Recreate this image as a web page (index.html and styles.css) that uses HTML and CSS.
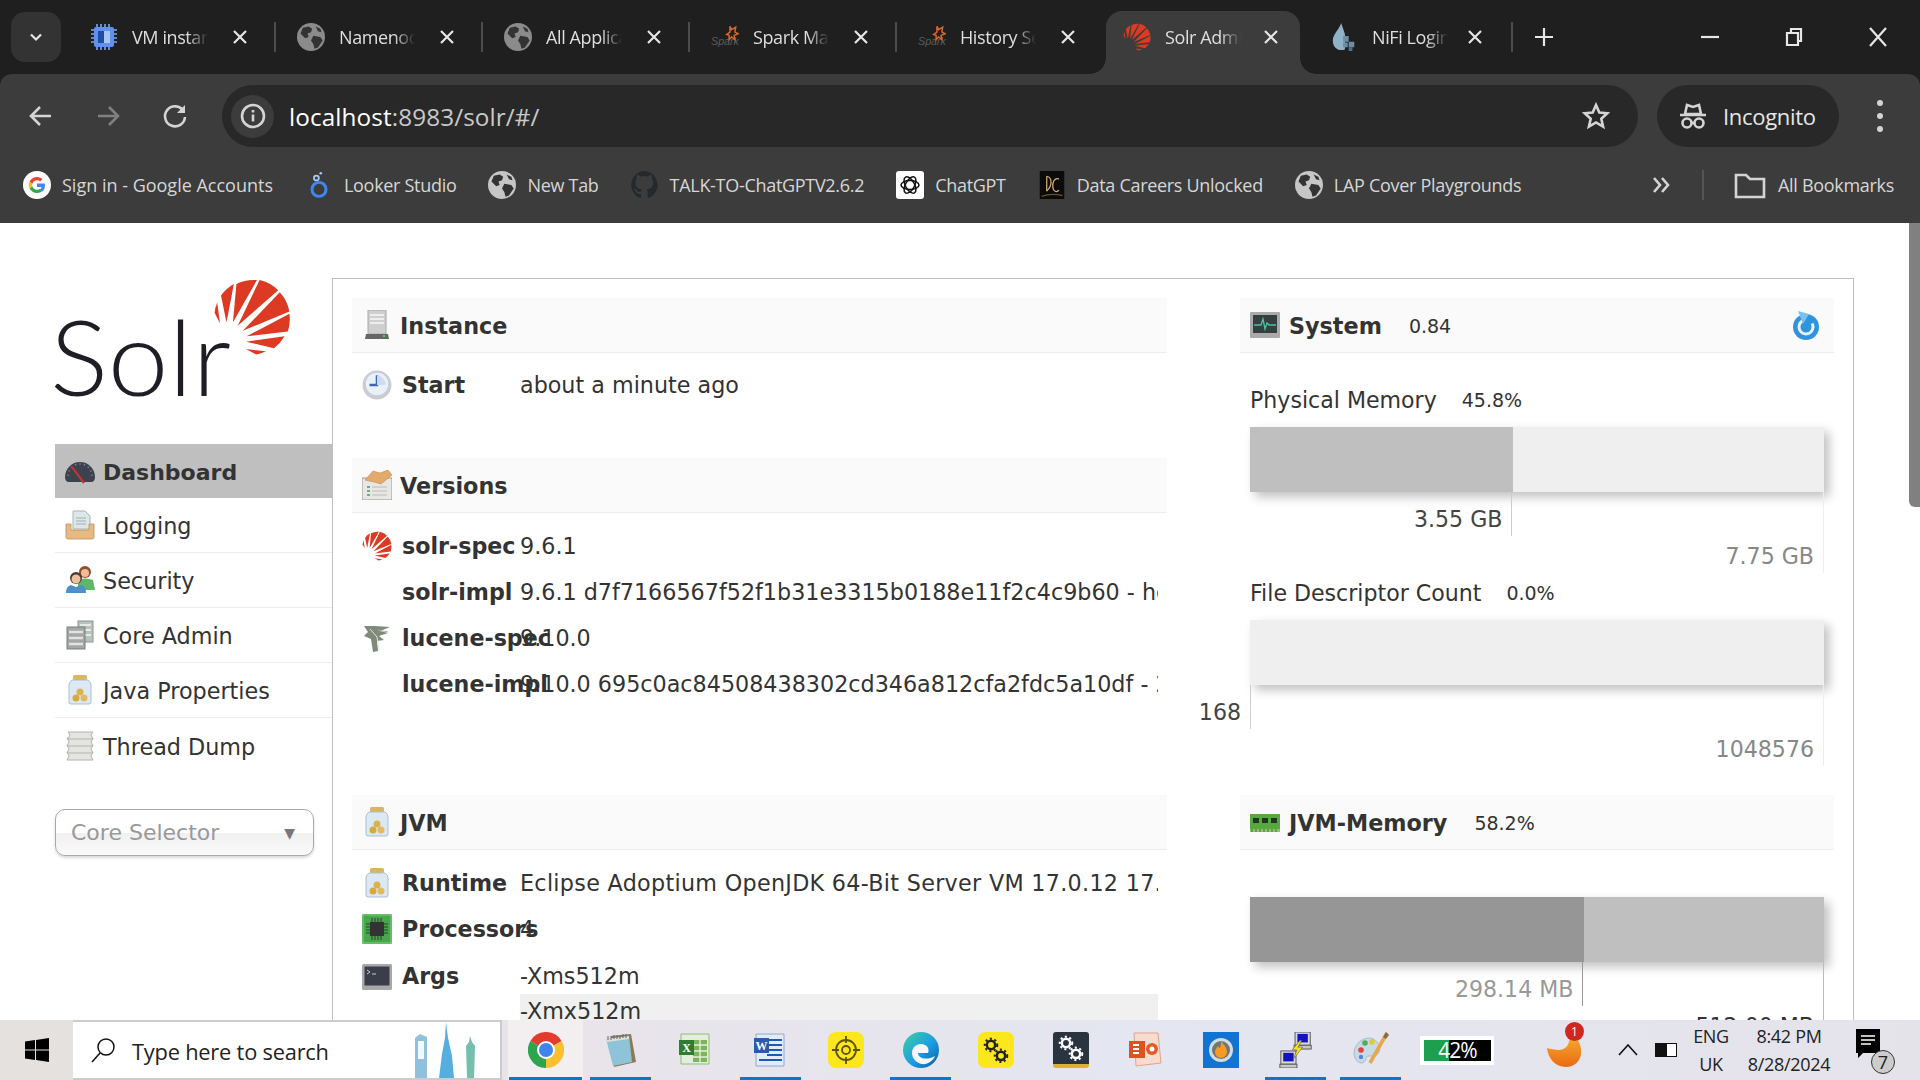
FILE: index.html
```html
<!DOCTYPE html>
<html lang="en">
<head>
<meta charset="utf-8">
<title>Solr Admin</title>
<link rel="stylesheet" href="styles.css">
</head>
<body>
<svg class="defs" aria-hidden="true">
  <defs>
    <linearGradient id="edgeg" x1="0" y1="0" x2="1" y2="1"><stop offset="0" stop-color="#3fd0a0"/><stop offset=".55" stop-color="#1b9de2"/><stop offset="1" stop-color="#0c59a4"/></linearGradient>
    <linearGradient id="orng" x1="0" y1="0" x2="0" y2="1"><stop offset="0" stop-color="#f7b733"/><stop offset="1" stop-color="#ea6a12"/></linearGradient>
    <symbol id="globe" viewBox="0 0 24 24"><circle cx="12" cy="12" r="12" fill="currentColor"/><path d="M5 4l5-1 3 2-1 3-3 1 1 3-3 1-4-4zM14 11l6 1 2 3-4 6-3 1-1-4-2-3zM16 3l4 2 1 3-3-1z" fill="#333"/></symbol>
    <symbol id="chip" viewBox="0 0 28 28"><path d="M7 1v26M11 1v26M15 1v26M19 1v26M1 7h26M1 11h26M1 15h26M1 19h26" stroke="#7ea6ee" stroke-width="1.6"/><rect x="4" y="4" width="20" height="20" rx="2" fill="#5f92ea"/><rect x="8" y="8" width="12" height="12" fill="#1b4fa8"/><path d="M14 8h6v12h-6z" fill="#a9c6f6"/></symbol>
    <symbol id="spark" viewBox="0 0 34 28"><text x="0" y="24" class="svg-spark">Spark</text><path d="M23 1l2 4 5-3-1 6 4 2-5 2 1 5-4-3-3 3 0-5-3-1 4-3z" fill="none" stroke="#d9682a" stroke-width="1.800"/></symbol>
    <symbol id="sun" viewBox="635 155 243 240"><g fill="#dc3a22"><path d="M648 230A117 117 0 0 0 640 262L657 295z"/><path d="M700 172A117 117 0 0 0 660 208L677 292z"/><path d="M772 160A117 117 0 0 0 708 172L697 292z"/><path d="M780 160A117 117 0 0 1 838 192L712 302z"/><path d="M843 198A117 117 0 0 1 873 258L728 318z"/><path d="M873 265A117 117 0 0 1 868 320L740 335z"/><path d="M858 335A117 117 0 0 1 825 372L738 352z"/><path d="M800 382A117 117 0 0 1 770 392L738 375z"/></g></symbol>
    <symbol id="nifi" viewBox="0 0 28 30"><path d="M11 0C9 7 2 12 2 19c0 6 4 10 9 10 2 0 3 0 4-1V12C14 8 12 4 11 0z" fill="#8fb2c9"/><path d="M13 14h6v6h-6zM19 20h6v6h-6zM13 21h5v5h-5z" fill="#6a8ea6"/><path d="M19 26h4v4h-4z" fill="#4e7188"/></symbol>
    <symbol id="gg" viewBox="0 0 28 28"><circle cx="14" cy="14" r="14" fill="#fff"/><path d="M22 14.3c0-.7-.1-1.3-.2-1.9H14v3.6h4.5c-.2 1-.8 1.9-1.7 2.5l2.7 2.1c1.6-1.5 2.5-3.7 2.5-6.3z" fill="#4285f4"/><path d="M14 22c2.2 0 4-.7 5.500-2l-2.700-2.100c-.7.5-1.700.8-2.800.8-2.100 0-3.900-1.400-4.600-3.400l-2.800 2.200C7.900 20.200 10.800 22 14 22z" fill="#34a853"/><path d="M9.400 15.300C9.200 14.800 9.100 14.400 9.100 14s.1-.8.3-1.300L6.600 10.500C6 11.600 5.700 12.800 5.700 14s.3 2.400.9 3.500z" fill="#fbbc05"/><path d="M14 9.300c1.200 0 2.300.4 3.100 1.200l2.400-2.400C18 6.700 16.200 6 14 6c-3.200 0-6.100 1.800-7.400 4.500l2.800 2.200C10.100 10.700 11.900 9.300 14 9.300z" fill="#ea4335"/></symbol>
    <symbol id="looker" viewBox="0 0 20 32"><circle cx="10" cy="21" r="8" fill="none" stroke="#4285f4" stroke-width="3.4"/><circle cx="7" cy="8" r="2.800" fill="none" stroke="#a8c7fa" stroke-width="2"/><circle cx="12" cy="2.500" r="1.500" fill="#a8c7fa"/></symbol>
    <symbol id="gh" viewBox="0 0 28 28"><path d="M14 0a14 14 0 0 0-5 27c1 0 1-.5 1-1v-3c-4 1-5-2-5-2-.8-1.800-1.800-2.300-1.800-2.300-1.400-1 .1-1 .1-1 1.500.1 2.300 1.600 2.300 1.600 1.400 2.300 3.500 1.700 4.400 1.300.1-1 .5-1.700 1-2-3.200-.4-6.500-1.600-6.500-7 0-1.500.5-2.800 1.400-3.800-.1-.4-.6-1.800.1-3.700 0 0 1.200-.4 3.800 1.400a13 13 0 0 1 7 0c2.600-1.800 3.800-1.400 3.800-1.400.7 1.900.2 3.300.1 3.700.9 1 1.400 2.300 1.400 3.800 0 5.400-3.300 6.600-6.500 7 .5.500 1 1.300 1 2.700V26c0 .5 0 1 1 1A14 14 0 0 0 14 0z" fill="#24292e"/></symbol>
    <symbol id="gpt" viewBox="0 0 28 28"><rect width="28" height="28" rx="3" fill="#fff"/><g fill="none" stroke="#111" stroke-width="1.500"><ellipse cx="14" cy="14" rx="9" ry="4.500"/><ellipse cx="14" cy="14" rx="9" ry="4.500" transform="rotate(60 14 14)"/><ellipse cx="14" cy="14" rx="9" ry="4.500" transform="rotate(120 14 14)"/></g></symbol>
    <symbol id="dc" viewBox="0 0 28 32"><rect width="28" height="32" fill="#0b0b0b"/><path d="M8 6v17M8 6c6 1 7 10 0 17M22 9c-5-2-8 4-7 10 .5 4 4 6 7 3" fill="none" stroke="#d9b26a" stroke-width="1.400"/><path d="M2 29c8-3 16-3 24-1" stroke="#6a5226" stroke-width="1.500" fill="none"/></symbol>
    <symbol id="gauge" viewBox="0 0 30 30"><path d="M0 21A15 15 0 0 1 30 21q0 5-4 5H4q-4 0-4-5z" fill="#3c424e"/><path d="M3 20A12 12 0 0 1 27 20" fill="none" stroke="#7c8290" stroke-width="1.500" stroke-dasharray="1.500 3"/><path d="M7 11l12 16" stroke="#c0352f" stroke-width="2.200"/></symbol>
    <symbol id="tray" viewBox="0 0 30 30"><path d="M8 1h12l5 5v13H8z" fill="#dde6e8" stroke="#a6b4b8"/><path d="M11 8h10M11 11h10M11 14h10" stroke="#9fb0b5"/><path d="M1 14h5v6h18v-6h5v13q0 2-2 2H3q-2 0-2-2z" fill="#e9b982" stroke="#bd9158" stroke-width=".8"/></symbol>
    <symbol id="people" viewBox="0 0 30 30"><circle cx="20" cy="7" r="6" fill="#8f4f2b"/><circle cx="20" cy="8" r="4" fill="#eebd98"/><path d="M13 15q7-3 15 0l2 10H13z" fill="#5fb56a"/><circle cx="11" cy="13" r="6" fill="#4b3a2c"/><circle cx="11" cy="14" r="4.500" fill="#edc19f"/><path d="M1 28q0-7 5-8l5 2 5-2q5 1 5 8z" fill="#4d8fc9"/></symbol>
    <symbol id="servers" viewBox="0 0 30 30"><rect x="13" y="1" width="15" height="21" fill="#b9c2bd" stroke="#8c948f"/><path d="M15 5h11M15 10h11M15 15h11" stroke="#e5eae6" stroke-width="2"/><rect x="2" y="7" width="18" height="22" fill="#a5a7a7" stroke="#7c7f7f"/><path d="M4 12h14M4 18h14M4 24h14" stroke="#e1e3e3" stroke-width="2.500"/></symbol>
    <symbol id="jar" viewBox="3 0 24 30"><rect x="8" y="0" width="14" height="5" rx="1.500" fill="#d9b65f"/><path d="M7 5h16q3 2 3 5v17q0 2-2 2H6q-2 0-2-2V10q0-3 3-5z" fill="#dce8f3" stroke="#a9bfd2"/><circle cx="15" cy="17" r="3.500" fill="#dcb14e"/><circle cx="11" cy="23" r="3.500" fill="#d8a93f"/><circle cx="19" cy="23" r="3.500" fill="#e2bb60"/></symbol>
    <symbol id="stack" viewBox="0 0 30 30"><g fill="#e4e4e0" stroke="#b4b4ae"><path d="M2 21h26l-2 4 2 4H2l2-4z"/><path d="M2 14h26l-2 4 2 4H2l2-4z"/><path d="M2 7h26l-2 4 2 4H2l2-4z"/><path d="M3 1h25l-2 3 2 4H3l2-4z"/></g></symbol>
    <symbol id="server" viewBox="0 0 24 30"><path d="M3 0h18v24H3z" fill="#cfcfcf" stroke="#aaa"/><path d="M5 5h14M5 9h14M5 13h14" stroke="#eee" stroke-width="2"/><path d="M1 24h22l1 5H0z" fill="#666"/><rect x="18" y="25" width="2" height="2" fill="#5fc46a"/></symbol>
    <symbol id="clock" viewBox="0 0 28 28"><circle cx="14" cy="14" r="13.500" fill="#c9cdd2"/><circle cx="14" cy="13" r="10.500" fill="#eaf0fa"/><path d="M14 5v9H7" stroke="#3f66b5" stroke-width="2.400" fill="none"/><path d="M14 5a9 9 0 0 1 8 9H14z" fill="#cddbf3"/></symbol>
    <symbol id="vers" viewBox="0 0 30 30"><rect x="0" y="8" width="30" height="22" fill="#e7e7e3" stroke="#999"/><path d="M5 17h3M5 21h3M5 25h3" stroke="#6a9" stroke-width="2"/><path d="M10 17h15M10 21h15M10 25h15" stroke="#bbb"/><path d="M3 10l8-9 7 2 8-3 4 5-11 9-7-2z" fill="#e3aa6c" stroke="#c48a4c" stroke-width=".6"/></symbol>
    <symbol id="lucene" viewBox="0 0 30 28"><path d="M2 2h11l15 1-10 4 8 2-9 3 5 4-7 1 1 10-5 1-2-13-7-3 4-4z" fill="#7f8a7c"/><path d="M8 5l7 8 2 13" stroke="#dfe6dc" fill="none"/><path d="M16 6l10 2" stroke="#a9b4a4"/></symbol>
    <symbol id="chipg" viewBox="0 0 30 30"><rect width="30" height="30" rx="1.500" fill="#46a84a"/><rect x="1" y="1" width="28" height="28" fill="none" stroke="#86cf85"/><path d="M10 4v22M13 4v22M16 4v22M19 4v22M4 10h22M4 13h22M4 16h22M4 19h22" stroke="#2f3a2f" stroke-width="1"/><rect x="8" y="8" width="14" height="14" fill="#333"/></symbol>
    <symbol id="term" viewBox="0 0 30 26"><rect width="30" height="26" rx="1.500" fill="#a8a8a8"/><rect x="2.500" y="2.500" width="25" height="19" fill="#3a3d4a"/><path d="M5 6l3 2-3 2M10 10h4" stroke="#ccc" fill="none"/></symbol>
    <symbol id="monitor" viewBox="0 0 30 26"><rect width="30" height="26" rx="1" fill="#aaa"/><rect x="3" y="3" width="24" height="18" fill="#33403f"/><path d="M4 13h7l2-6 2 10 2-6 2 2h7" stroke="#53bfa5" fill="none" stroke-width="1.300"/></symbol>
    <symbol id="refresh" viewBox="0 0 28 30"><circle cx="14" cy="16" r="13" fill="#2f93dd"/><circle cx="14" cy="16" r="7" fill="none" stroke="#e6f3fc" stroke-width="3" stroke-dasharray="30 10"/><path d="M6 0l11 3-6 10z" fill="#7cc0ee"/></symbol>
    <symbol id="ram" viewBox="0 0 30 20"><rect y="2" width="30" height="15" fill="#56a83f"/><path d="M3 6h6v5H3zM12 6h6v5h-6zM21 6h6v5h-6z" fill="#203820"/><path d="M0 17h30v3H0z" fill="#8cc473"/><path d="M2 17v3M6 17v3M10 17v3M14 17v3M18 17v3M22 17v3M26 17v3" stroke="#3c7a2a"/></symbol>
    <symbol id="chrome" viewBox="0 0 36 36"><path d="M2.400 9A18 18 0 0 1 33.600 9L18 18z" fill="#e33b2e"/><path d="M33.600 9A18 18 0 0 1 18 36L18 18z" fill="#fbc02d"/><path d="M18 36A18 18 0 0 1 2.400 9L18 18z" fill="#2ea44f"/><circle cx="18" cy="18" r="9" fill="#fff"/><circle cx="18" cy="18" r="7" fill="#3f83ec"/></symbol>
    <symbol id="notepad" viewBox="0 0 36 36"><path d="M8 4l20-2 5 28-22 5z" fill="#8a7a5a"/><path d="M3 7l23-3 3 26-19 4z" fill="#8fc4d8"/><path d="M3 7l23-3v3L4 10z" fill="#dedede"/><path d="M5 4v4M8 4v4M11 3v4M14 3v4M17 3v4M20 2v4M23 2v4" stroke="#666"/></symbol>
    <symbol id="excel" viewBox="0 0 36 36"><path d="M3 2h28v30H3z" fill="#e3efdc" stroke="#8dbb70"/><path d="M15 8h14v22H15z" fill="#7fb35c"/><path d="M15 13h14M15 19h14M15 25h14M22 8v22" stroke="#e3efdc" stroke-width="1.400"/><rect x="1" y="8" width="15" height="15" fill="#2f7d32"/><text x="8.500" y="20" class="svg-office">X</text></symbol>
    <symbol id="word" viewBox="0 0 36 36"><path d="M3 2h28v32H3z" fill="#e2ebf7" stroke="#8aa8d5"/><path d="M14 8h15M14 13h15M14 18h15M14 23h15M6 28h23" stroke="#1f5bb5" stroke-width="2.200"/><rect x="1" y="6" width="15" height="15" fill="#2a5caa"/><text x="8.500" y="18" class="svg-office">W</text></symbol>
    <symbol id="ytarget" viewBox="0 0 36 36"><rect width="36" height="36" rx="8" fill="#fce61c"/><circle cx="18" cy="18" r="10" fill="none" stroke="#5c5310" stroke-width="1.800"/><circle cx="18" cy="18" r="4" fill="none" stroke="#5c5310" stroke-width="1.800"/><path d="M18 4v7M18 25v7M4 18h7M25 18h7" stroke="#5c5310" stroke-width="1.800"/></symbol>
    <symbol id="edge" viewBox="0 0 36 36"><circle cx="18" cy="18" r="18" fill="url(#edgeg)"/><path d="M9 21C9 14 16 10 22 13c4 2 4 6 3 8H15c0 5 8 8 17 3-2 5-8 9-13 8C13 31 9 26 9 21z" fill="#fff" opacity=".95"/><path d="M19 21h7c0 2-3 2-7 0z" fill="#1b7fd0"/></symbol>
    <symbol id="gears" viewBox="0 0 36 36"><g fill="none"><circle cx="12" cy="12" r="5" stroke="currentColor" stroke-width="3"/><circle cx="12" cy="12" r="7.500" stroke="currentColor" stroke-width="2.400" stroke-dasharray="2.500 3"/><circle cx="24" cy="25" r="5" stroke="currentColor" stroke-width="3"/><circle cx="24" cy="25" r="7.500" stroke="currentColor" stroke-width="2.400" stroke-dasharray="2.500 3"/></g></symbol>
    <symbol id="ppt" viewBox="0 0 36 36"><path d="M6 1h24l3 30-25 3z" fill="#f6dccf" stroke="#e0a58a"/><path d="M1 9h16v17H1z" fill="#d9541e"/><path d="M5 13h6M5 17h6M5 21h6" stroke="#fff" stroke-width="2"/><circle cx="24" cy="17" r="6" fill="#e7582b"/><circle cx="24" cy="17" r="2.500" fill="#fff"/></symbol>
    <symbol id="flame" viewBox="0 0 36 36"><rect width="36" height="36" fill="#1173d4"/><circle cx="18" cy="18" r="12" fill="#d4dce0"/><circle cx="18" cy="18" r="9" fill="#6f757b"/><path d="M18 8c1 4 6 6 6 12a6 6 0 0 1-12 0c0-3 2-4 3-6 1 1 1 2 2 2 1-2 1-5 1-8z" fill="#f59a23"/></symbol>
    <symbol id="putty" viewBox="0 0 36 38"><rect x="17" y="0" width="16" height="14" fill="#d8d8d8" stroke="#555"/><rect x="19.500" y="2" width="11" height="9" fill="#1212c0"/><rect x="16" y="14" width="18" height="4" fill="#c8c8c8" stroke="#555"/><rect x="2" y="20" width="16" height="14" fill="#d8d8d8" stroke="#555"/><rect x="4.500" y="22" width="11" height="9" fill="#1212c0"/><rect x="1" y="34" width="18" height="4" fill="#c8c8c8" stroke="#555"/><path d="M22 9l-8 10h5l-4 10 10-13h-5l4-7z" fill="#f7e21f" stroke="#665" stroke-width=".7"/></symbol>
    <symbol id="paint" viewBox="0 0 36 36"><path d="M15 6C7 7 1 14 1 21c0 8 7 12 10 9 3-2 1-6 5-6 3 0 8 1 10-4 3-6-4-15-11-14z" fill="#c7dae6" stroke="#91aab9" stroke-width=".7"/><circle cx="8" cy="18" r="2.800" fill="#d44"/><circle cx="12" cy="11" r="2.800" fill="#5a5"/><circle cx="19" cy="10" r="2.800" fill="#dc3"/><circle cx="8" cy="25" r="2.200" fill="#58c"/><path d="M34 1L17 31" stroke="#e8a84a" stroke-width="3.600"/><path d="M33 0l3 3-3 4-3-2z" fill="#8a6b42"/></symbol>
    <symbol id="crescent" viewBox="0 0 36 38"><path d="M23 0c3 10-1 20-10 20-5 0-9-1-13-2 1 11 9 20 20 20 9 0 15-6 16-14 1-10-5-21-13-24z" fill="url(#orng)"/></symbol>
    <symbol id="skyline" viewBox="0 0 66 56"><path d="M1 56V16l5-4 7 3v41z" fill="#8fc1dc"/><path d="M4 19h6v18H4z" fill="#f2f8fb"/><path d="M32 0l2 16 4 18 2 22H25l3-24 3-16z" fill="#55aede"/><path d="M56 14l2 6 3 4-1 32h-7l-1-32 3-4z" fill="#74bfae"/></symbol>
  </defs>
</svg>

<header class="chrome">
  <div class="tabbar">
    <div class="tabmenu"><svg class="i16" viewBox="0 0 16 16"><path d="M3 5.500l5 5 5-5" class="st-w"/></svg></div>
    <div class="tab"><svg class="fav"><use href="#chip"/></svg><span class="ttl">VM instances</span><svg class="x" viewBox="0 0 16 16"><path d="M2 2l12 12M14 2L2 14" class="st-w"/></svg></div><i class="sep"></i>
    <div class="tab"><svg class="fav gl"><use href="#globe"/></svg><span class="ttl">Namenode</span><svg class="x" viewBox="0 0 16 16"><path d="M2 2l12 12M14 2L2 14" class="st-w"/></svg></div><i class="sep"></i>
    <div class="tab"><svg class="fav gl"><use href="#globe"/></svg><span class="ttl">All Applications</span><svg class="x" viewBox="0 0 16 16"><path d="M2 2l12 12M14 2L2 14" class="st-w"/></svg></div><i class="sep"></i>
    <div class="tab"><svg class="fav"><use href="#spark"/></svg><span class="ttl">Spark Master</span><svg class="x" viewBox="0 0 16 16"><path d="M2 2l12 12M14 2L2 14" class="st-w"/></svg></div><i class="sep"></i>
    <div class="tab"><svg class="fav"><use href="#spark"/></svg><span class="ttl">History Server</span><svg class="x" viewBox="0 0 16 16"><path d="M2 2l12 12M14 2L2 14" class="st-w"/></svg></div><i class="sep sep-off"></i>
    <div class="tab active"><svg class="fav"><use href="#sun"/></svg><span class="ttl">Solr Admin</span><svg class="x" viewBox="0 0 16 16"><path d="M2 2l12 12M14 2L2 14" class="st-w"/></svg></div>
    <div class="tab last"><svg class="fav"><use href="#nifi"/></svg><span class="ttl">NiFi Login</span><svg class="x" viewBox="0 0 16 16"><path d="M2 2l12 12M14 2L2 14" class="st-w"/></svg></div><i class="sep"></i>
    <svg class="plus" viewBox="0 0 20 20"><path d="M10 1v18M1 10h18" class="st-w"/></svg>
    <div class="winctl">
      <div class="wbtn"><svg class="i20" viewBox="0 0 20 20"><path d="M1 10h18" class="st-w"/></svg></div>
      <div class="wbtn"><svg class="i20" viewBox="0 0 20 20"><path d="M3 6h11v12H3zM7 6V2h10v12h-3" class="st-w"/></svg></div>
      <div class="wbtn"><svg class="i20" viewBox="0 0 20 20"><path d="M2 1l16 18M18 1L2 19" class="st-w"/></svg></div>
    </div>
  </div>
  <div class="toolbar">
    <div class="navrow">
      <div class="navbtn"><svg class="i28" viewBox="0 0 28 28"><path d="M24 14H5M13 5l-9 9 9 9" class="st-n"/></svg></div>
      <div class="navbtn dim"><svg class="i28" viewBox="0 0 28 28"><path d="M4 14h19M15 5l9 9-9 9" class="st-n"/></svg></div>
      <div class="navbtn"><svg class="i28" viewBox="0 0 28 28"><path d="M22.500 9A10 10 0 1 0 24 15" class="st-n"/><path d="M24 3v8h-8z" class="fill-n"/></svg></div>
      <div class="addr">
        <div class="infoc"><svg class="i28" viewBox="0 0 28 28"><circle cx="14" cy="14" r="11" class="st-n"/><path d="M14 12.500v7M14 8v2.500" class="st-n"/></svg></div>
        <span class="url"><b class="host">localhost</b>:8983/solr/#/</span>
        <svg class="star" viewBox="0 0 28 28"><path d="M14 3l3.300 7.500 8 .8-6 5.400 1.800 8L14 20.500 6.900 24.700l1.800-8-6-5.400 8-.8z" class="st-n"/></svg>
      </div>
      <div class="incog"><svg class="i28" viewBox="0 0 28 28"><path d="M6 12l2-9 6 2 6-2 2 9zM1 13h26" class="st-n"/><circle cx="8" cy="21" r="4.500" class="st-n"/><circle cx="20" cy="21" r="4.500" class="st-n"/><path d="M12 21h4" class="st-n"/></svg><span>Incognito</span></div>
      <div class="kebab"><i></i><i></i><i></i></div>
    </div>
    <nav class="bookmarks">
      <a class="bm bm-first"><svg class="fav"><use href="#gg"/></svg>Sign in - Google Accounts</a>
      <a class="bm"><svg class="fav"><use href="#looker"/></svg>Looker Studio</a>
      <a class="bm"><svg class="fav glb"><use href="#globe"/></svg>New Tab</a>
      <a class="bm"><svg class="fav"><use href="#gh"/></svg>TALK-TO-ChatGPTV2.6.2</a>
      <a class="bm"><svg class="fav"><use href="#gpt"/></svg>ChatGPT</a>
      <a class="bm"><svg class="fav"><use href="#dc"/></svg>Data Careers Unlocked</a>
      <a class="bm"><svg class="fav glb"><use href="#globe"/></svg>LAP Cover Playgrounds</a>
      <svg class="chev" viewBox="0 0 20 20"><path d="M3 3l6 7-6 7M11 3l6 7-6 7" class="st-n"/></svg>
      <i class="bsep"></i>
      <a class="bm bm-all"><svg class="folder" viewBox="0 0 32 28"><path d="M2 4h10l4 4h14v18H2z" class="st-n"/></svg>All Bookmarks</a>
    </nav>
  </div>
</header>

<div class="page">
  <aside class="side">
    <div class="logo"><svg class="logosvg" viewBox="0 0 240 122"><text x="-5" y="118" textLength="181" lengthAdjust="spacingAndGlyphs" class="logotext">Solr</text><use href="#sun" x="158" y="0" width="78" height="78"/></svg></div>
    <ul class="menu">
      <li class="on"><svg class="mi"><use href="#gauge"/></svg>Dashboard</li>
      <li><svg class="mi"><use href="#tray"/></svg>Logging</li>
      <li><svg class="mi"><use href="#people"/></svg>Security</li>
      <li><svg class="mi"><use href="#servers"/></svg>Core Admin</li>
      <li><svg class="mi"><use href="#jar"/></svg>Java Properties</li>
      <li><svg class="mi"><use href="#stack"/></svg>Thread Dump</li>
    </ul>
    <div class="coresel"><span>Core Selector</span><span class="arrow">▼</span></div>
  </aside>
  <main class="content">
    <div class="leftcol">
      <section class="sec sec-inst">
        <h2 class="hd"><svg class="hi"><use href="#server"/></svg>Instance</h2>
        <div class="row"><svg class="ri"><use href="#clock"/></svg><b class="lb">Start</b><div class="val">about a minute ago</div></div>
      </section>
      <section class="sec sec-ver">
        <h2 class="hd"><svg class="hi"><use href="#vers"/></svg>Versions</h2>
        <div class="row"><svg class="ri"><use href="#sun"/></svg><b class="lb">solr-spec</b><div class="val">9.6.1</div></div>
        <div class="row"><span class="ri"></span><b class="lb">solr-impl</b><div class="val">9.6.1 d7f7166567f52f1b31e3315b0188e11f2c4c9b60 - hossman - 2024-07-24</div></div>
        <div class="row"><svg class="ri"><use href="#lucene"/></svg><b class="lb">lucene-spec</b><div class="val">9.10.0</div></div>
        <div class="row"><span class="ri"></span><b class="lb">lucene-impl</b><div class="val">9.10.0 695c0ac84508438302cd346a812cfa2fdc5a10df - 2024-02-14</div></div>
      </section>
      <section class="sec">
        <h2 class="hd"><svg class="hi"><use href="#jar"/></svg>JVM</h2>
        <div class="row"><svg class="ri"><use href="#jar"/></svg><b class="lb">Runtime</b><div class="val val-rt">Eclipse Adoptium OpenJDK 64-Bit Server VM 17.0.12 17.0.12+7</div></div>
        <div class="row"><svg class="ri"><use href="#chipg"/></svg><b class="lb">Processors</b><div class="val">4</div></div>
        <div class="row row-args"><svg class="ri"><use href="#term"/></svg><b class="lb">Args</b>
          <ul class="val args"><li>-Xms512m</li><li class="alt">-Xmx512m</li></ul>
        </div>
      </section>
    </div>
    <div class="rightcol">
      <section class="sec sec-sys">
        <h2 class="hd hd-r"><svg class="hi hi-r"><use href="#monitor"/></svg>System<small class="hv">0.84</small><svg class="refresh"><use href="#refresh"/></svg></h2>
        <div class="mem">
          <div class="mlabel">Physical Memory<small class="mpct">45.8%</small></div>
          <div class="bar"><div class="used u458"></div></div>
          <div class="scale"><div class="ulb u458"><span>3.55 GB</span></div><div class="tlb">7.75 GB</div></div>
        </div>
        <div class="mem">
          <div class="mlabel">File Descriptor Count<small class="mpct">0.0%</small></div>
          <div class="bar"></div>
          <div class="scale"><div class="ulb u0"><span>168</span></div><div class="tlb">1048576</div></div>
        </div>
      </section>
      <section class="sec">
        <h2 class="hd hd-r"><svg class="hi hi-r ram"><use href="#ram"/></svg>JVM-Memory<small class="hv">58.2%</small></h2>
        <div class="mem mem-jvm">
          <div class="bar bar-dark"><div class="used u582"></div></div>
          <div class="scale"><div class="ulb ulb-g u582"><span>298.14 MB</span></div><div class="tlb tlb-d">512.00 MB</div></div>
        </div>
      </section>
    </div>
  </main>
  <div class="scrollthumb"></div>
</div>

<footer class="taskbar">
  <div class="start"><svg class="win" viewBox="0 0 24 24"><path d="M0 3.500l10-1.400v9.400H0zM11 2l13-2v11.500H11zM0 12.500h10v9.400L0 20.500zM11 12.500h13V24l-13-2z" fill="#000"/></svg></div>
  <div class="search"><svg class="mag" viewBox="0 0 26 26"><circle cx="16" cy="10" r="8" fill="none" stroke="#111" stroke-width="1.500"/><path d="M10 16L2 25" stroke="#111" stroke-width="1.500"/></svg><span>Type here to search</span><svg class="sky"><use href="#skyline"/></svg></div>
  <div class="apps">
    <div class="app run act"><svg class="ai"><use href="#chrome"/></svg></div>
    <div class="app run"><svg class="ai"><use href="#notepad"/></svg></div>
    <div class="app"><svg class="ai"><use href="#excel"/></svg></div>
    <div class="app run"><svg class="ai"><use href="#word"/></svg></div>
    <div class="app"><svg class="ai"><use href="#ytarget"/></svg></div>
    <div class="app run"><svg class="ai"><use href="#edge"/></svg></div>
    <div class="app"><div class="tile tile-y"><svg class="ai ai-s"><use href="#gears"/></svg></div></div>
    <div class="app"><div class="tile tile-d"><svg class="ai ai-s"><use href="#gears"/></svg></div></div>
    <div class="app"><svg class="ai"><use href="#ppt"/></svg></div>
    <div class="app"><svg class="ai"><use href="#flame"/></svg></div>
    <div class="app run"><svg class="ai"><use href="#putty"/></svg></div>
    <div class="app run"><svg class="ai"><use href="#paint"/></svg></div>
  </div>
  <div class="batw"><span>42%</span></div>
  <div class="cres"><svg class="ai"><use href="#crescent"/></svg><span class="badge">1</span></div>
  <svg class="caret" viewBox="0 0 20 12"><path d="M1 11l9-10 9 10" class="st-k"/></svg>
  <div class="minibat"><i></i></div>
  <div class="lang"><span>ENG</span><span>UK</span></div>
  <div class="clock"><span>8:42 PM</span><span>8/28/2024</span></div>
  <div class="notif"><svg class="nsvg" viewBox="0 0 28 34"><path d="M1 1h24v24H8l-5 5v-5H1z" fill="#000"/><path d="M6 8h14M6 12h14M6 16h10" stroke="#fff" stroke-width="1.500"/></svg><span class="ncount">7</span></div>
</footer>
</body>
</html>
```
FILE: styles.css
```css
* { box-sizing: border-box; }
html, body { margin: 0; padding: 0; height: 100%; overflow: hidden; }
body { display: flex; flex-direction: column; width: 1920px; height: 1080px; font-family: "DejaVu Sans", sans-serif; color: #333; background: #fff; }
ul { list-style: none; margin: 0; padding: 0; }
h2 { margin: 0; font-size: inherit; }
svg { display: block; flex: none; }
.defs { position: absolute; width: 0; height: 0; }
.svg-spark { font: italic 13px "Liberation Sans", sans-serif; fill: #5c5c5c; }
.svg-office { font: bold 12px "Liberation Serif", serif; fill: #fff; text-anchor: middle; }
.logotext { font: 300 104px "Lato", sans-serif; fill: #1f1d26; }

.st-w { fill: none; stroke: #e6e6e6; stroke-width: 2.2; }
.st-n { fill: none; stroke: #d4d4d4; stroke-width: 2.6; }
.fill-n { fill: #d4d4d4; }
.st-k { fill: none; stroke: #111; stroke-width: 1.6; }
.i16 { width: 16px; height: 16px; }
.i20 { width: 20px; height: 20px; }
.i28 { width: 28px; height: 28px; }

/* browser chrome */
.chrome { flex: none; background: #1f1f1f; font-family: "Open Sans", sans-serif; color: #dedede; }
.tabbar { display: flex; align-items: flex-end; height: 74px; padding-left: 11px; }
.tabmenu { flex: none; display: flex; align-items: center; justify-content: center; width: 50px; height: 50px; margin: 0 14px 12px 0; border-radius: 14px; background: #333; }
.tab { flex: none; display: flex; align-items: center; width: 199px; height: 63px; padding: 0 26px 12px 15px; font-size: 18px; position: relative; }
.fav { width: 28px; height: 28px; }
.gl { color: #8b8b8b; }
.glb { color: #c6c6c6; }
.ttl { width: 76px; margin-left: 14px; white-space: nowrap; overflow: hidden; letter-spacing: -.4px; -webkit-mask-image: linear-gradient(to right, #000 72%, transparent); mask-image: linear-gradient(to right, #000 72%, transparent); }
.x { width: 16px; height: 16px; margin-left: auto; }
.sep { flex: none; width: 2px; height: 30px; margin: 0 6px 22px 0; background: #4c4c4c; }
.sep-off { visibility: hidden; margin-right: 2px; }
.tab.active { width: 194px; padding: 0 21px 12px 17px; background: #3c3c3c; border-radius: 16px 16px 0 0; }
.tab.active::before, .tab.active::after { content: ""; position: absolute; bottom: 0; width: 16px; height: 16px; }
.tab.active::before { left: -16px; background: radial-gradient(circle at 0 0, transparent 15.5px, #3c3c3c 16px); }
.tab.active::after { right: -16px; background: radial-gradient(circle at 100% 0, transparent 15.5px, #3c3c3c 16px); }
.tab.last { width: 194px; margin-left: 17px; padding: 0 28px 12px 13px; }
.plus { width: 20px; height: 20px; margin: 0 0 27px 15px; }
.winctl { display: flex; margin-left: auto; margin-bottom: 27px; }
.wbtn { display: flex; justify-content: center; width: 84px; }

.toolbar { height: 149px; padding: 11px 0 0 7px; background: #3c3c3c; border-radius: 12px 12px 0 0; }
.navrow { display: flex; align-items: center; height: 62px; }
.navbtn { flex: none; display: flex; justify-content: center; width: 67px; }
.navbtn.dim { opacity: .45; }
.addr { flex: none; display: flex; align-items: center; width: 1416px; height: 62px; margin-left: 14px; padding: 0 28px 0 9px; border-radius: 31px; background: #282828; }
.infoc { display: flex; align-items: center; justify-content: center; width: 43px; height: 43px; border-radius: 50%; background: #3c3c3c; }
.url { margin-left: 15px; font-size: 24.3px; letter-spacing: .1px; color: #c9c9c9; }
.host { font-weight: 400; color: #fff; }
.star { width: 28px; height: 28px; margin-left: auto; }
.incog { flex: none; display: flex; align-items: center; gap: 16px; width: 182px; height: 62px; margin-left: 19px; padding-left: 22px; border-radius: 31px; background: #282828; font-size: 22px; letter-spacing: -.3px; color: #e6e6e6; }
.kebab { flex: none; display: flex; flex-direction: column; align-items: center; gap: 7px; width: 81px; }
.kebab i { width: 6px; height: 6px; border-radius: 50%; background: #d4d4d4; }
.bookmarks { display: flex; align-items: center; height: 76px; padding-left: 16px; font-size: 18px; letter-spacing: -.3px; color: #d6d6d6; white-space: nowrap; }
.bm { flex: none; display: flex; align-items: center; gap: 11px; margin-right: 32px; }
.bm-first { letter-spacing: 0; }
.chev { width: 20px; height: 20px; margin-left: auto; }
.bsep { flex: none; width: 2px; height: 30px; margin-left: 31px; background: #555; }
.bm-all { margin: 0 26px 0 30px; gap: 12px; }
.folder { width: 32px; height: 28px; }

/* page */
.page { flex: 1; min-height: 0; display: flex; align-items: flex-start; padding: 55px 0 0 55px; overflow: hidden; position: relative; background: #fff; }
.side { flex: none; width: 277px; }
.logo { height: 166px; }
.logosvg { width: 240px; height: 122px; overflow: visible; }
.menu { font-size: 22.3px; }
.menu li { display: flex; align-items: center; gap: 8px; height: 55px; padding: 2px 0 0 10px; border-bottom: 1px solid #eee; }
.menu li:last-child { border-bottom: 0; }
.menu li.on { height: 54px; background: #bfbfbf; font-size: 22px; font-weight: bold; border-bottom: 0; }
.mi { width: 30px; height: 30px; margin-top: -2px; }
.coresel { display: flex; align-items: center; justify-content: space-between; width: 259px; height: 47px; margin-top: 36px; padding: 0 18px 0 15px; border: 1px solid #aaa; border-radius: 10px; background: linear-gradient(#fff 50%, #f0f0f0 50%, #fafafa); box-shadow: 0 2px 3px rgba(0,0,0,.15); font-size: 22px; color: #999; }
.arrow { font-size: 14px; color: #777; }

.content { flex: none; display: flex; justify-content: space-between; width: 1522px; min-height: 900px; padding: 19px 19px 0 19px; border: 1px solid #c0c0c0; border-bottom: 0; }
.leftcol { flex: none; width: 815px; }
.rightcol { flex: none; width: 594px; }
.hd { display: flex; align-items: center; height: 55px; padding: 2px 0 0 10px; background: #fafafa; border-bottom: 1px solid #eee; font-size: 22.3px; font-weight: bold; }
.hi { width: 30px; height: 30px; margin: -2px 8px 0 0; }
.hi-r { width: 30px; height: 26px; margin-right: 9px; }
.ram { height: 20px; }
.hv { margin-left: 27px; font-size: 19px; font-weight: normal; }
.refresh { width: 28px; height: 30px; margin-left: auto; margin-right: 14px; }
.sec-inst { height: 160px; }
.sec-ver { height: 337px; }
.sec-sys { height: 497px; }
.row { display: flex; align-items: center; height: 46px; padding: 0 9px 0 10px; font-size: 22.25px; }
.row .lb { font-size: 22.2px; }
.hd + .row { margin-top: 10px; }
.sec-inst .hd + .row { margin-top: 9px; }
.ri { flex: none; width: 30px; height: 30px; margin-right: 10px; }
.lb { flex: none; width: 118px; white-space: nowrap; }
.val { flex: 1; min-width: 0; white-space: nowrap; overflow: hidden; }
.val-rt { letter-spacing: .3px; }
.row-args { align-items: flex-start; padding-top: 7px; overflow: visible; height: auto; }
.row-args .lb { line-height: 35px; }
.row-args .ri { margin-top: 3px; }
.args li { height: 35px; line-height: 35px; }
.args li.alt { background: #f0f0f0; }

.mem { padding-top: 28px; height: 220px; font-size: 22.1px; }
.mem + .mem { padding-top: 1px; height: 193px; }
.mem-jvm { padding-top: 47px; }
.mlabel { display: flex; align-items: center; height: 38px; margin: 0 0 8px 10px; white-space: nowrap; }
.mpct { margin-left: 25px; font-size: 19px; }
.bar { display: flex; width: 574px; height: 65px; margin-left: 10px; background: #efefef; box-shadow: 5px 5px 10px #c0c0c0; }
.bar-dark { background: #bfbfbf; }
.used { height: 100%; background: #bfbfbf; }
.bar-dark .used { background: #969696; }
.u458 { width: 45.8%; }
.u582 { width: 58.2%; }
.u0 { width: 0; }
.scale { width: 574px; margin-left: 10px; border-right: 1px solid #eee; }
.bar-dark + .scale { border-right-color: #bbb; }
.ulb { display: flex; justify-content: flex-end; align-items: center; height: 44px; padding-top: 10px; border-right: 1px solid #ccc; white-space: nowrap; color: #444; }
.ulb span { margin-right: 9px; }
.ulb-g { color: #999; border-right-color: #999; }
.tlb { display: flex; justify-content: flex-end; align-items: center; height: 37px; padding: 3px 9px 0 0; color: #888; }
.tlb-d { color: #333; }
.scrollthumb { position: absolute; top: 0; right: 0; width: 11px; height: 284px; background: #808080; border-radius: 0 0 0 6px; }

/* taskbar */
.taskbar { flex: none; display: flex; align-items: center; height: 60px; background: linear-gradient(to right, #e4e1de, #e9e4ea 30%, #e4e6f1 60%, #e5e3ea); font-family: "Open Sans", sans-serif; color: #111; position: relative; }
.start { flex: none; display: flex; justify-content: center; width: 73px; }
.win { width: 24px; height: 24px; }
.search { flex: none; display: flex; align-items: center; width: 429px; height: 60px; padding-left: 17px; border: 2px solid #ccc; border-left: 0; background: #fff; font-size: 21.8px; letter-spacing: -.2px; color: #222; overflow: hidden; }
.search span { padding-top: 2px; }
.mag { width: 26px; height: 26px; margin-right: 16px; }
.sky { width: 66px; height: 56px; margin: auto 20px 0 auto; }
.apps { flex: none; display: flex; height: 60px; margin-left: 6px; }
.app { flex: none; display: flex; align-items: center; justify-content: center; width: 75px; height: 60px; position: relative; }
.app.run::after { content: ""; position: absolute; left: 7px; right: 7px; bottom: 0; height: 3px; background: #0078d4; }
.app.act { background: #f3eeef; }
.app.act::after { left: 1px; right: 1px; }
.ai { width: 36px; height: 36px; }
.tile { display: flex; align-items: center; justify-content: center; width: 36px; height: 36px; border-radius: 7px; }
.tile-y { background: #fce61c; color: #222; }
.tile-d { background: #2a3340; color: #fff; border-bottom: 4px solid #d9b52f; border-radius: 3px; }
.ai-s { width: 30px; height: 30px; }
.batw { flex: none; display: flex; align-items: center; justify-content: center; width: 74px; height: 29px; margin-left: 12px; border: 4px solid #fff; border-right-width: 3px; background: linear-gradient(to right, #1e9e4f 38%, #000 38%); font-size: 21px; letter-spacing: -1px; color: #fff; }
.cres { flex: none; width: 36px; height: 40px; margin: 2px 0 0 52px; position: relative; }
.badge { position: absolute; top: -9px; right: -2px; width: 19px; height: 19px; border-radius: 50%; background: #d0281f; color: #fff; font-size: 12px; line-height: 19px; text-align: center; }
.caret { width: 20px; height: 12px; margin-left: 36px; }
.minibat { flex: none; width: 22px; height: 14px; margin-left: 17px; border: 1.500px solid #111; background: #fff; }
.minibat i { display: block; width: 11px; height: 100%; background: #111; }
.lang, .clock { flex: none; display: flex; flex-direction: column; align-items: center; justify-content: center; gap: 5px; font-size: 18px; letter-spacing: -.3px; line-height: 23px; color: #222; }
.lang { width: 40px; margin-left: 14px; }
.clock { width: 90px; margin-left: 13px; }
.notif { flex: none; width: 36px; height: 44px; margin-left: 21px; position: relative; }
.nsvg { width: 28px; height: 34px; }
.ncount { position: absolute; right: -4px; bottom: -2px; width: 24px; height: 24px; border: 1px solid #333; border-radius: 50%; background: #ccc; font-size: 18px; line-height: 22px; text-align: center; color: #222; }
```
